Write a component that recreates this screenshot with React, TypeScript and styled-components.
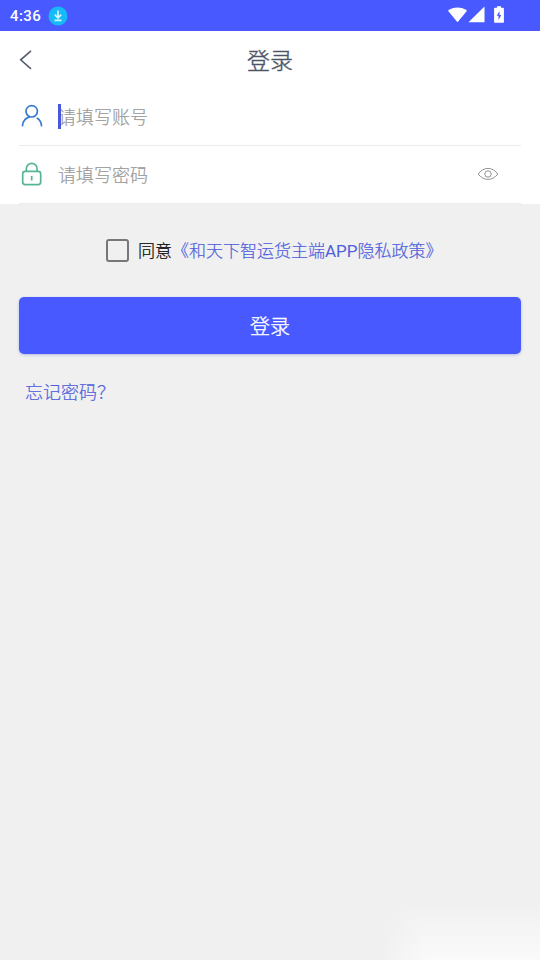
import React from 'react';
import styled, { createGlobalStyle } from 'styled-components';

const GlobalStyle = createGlobalStyle`
  * { box-sizing: border-box; }
  body { margin: 0; background: #f0f0f0; }
`;

const Screen = styled.main`
  position: relative;
  display: flex;
  flex-direction: column;
  width: 540px;
  height: 960px;
  overflow: hidden;
  background: #f0f0f0;
  font-family: "Noto Sans CJK SC", sans-serif;
  font-weight: 300;
  -webkit-text-stroke: 0.2px currentColor;
`;

const StatusBar = styled.header`
  display: flex;
  align-items: center;
  height: 31px;
  padding: 0 34px 0 10px;
  background: #485aff;
  color: #fff;
`;

const Clock = styled.time`
  width: 38px;
  padding-top: 1px;
  font-family: Roboto, sans-serif;
  font-size: 15px;
  font-weight: 500;
  line-height: 30px;
  letter-spacing: 0.4px;
  white-space: nowrap;
  -webkit-text-stroke: 0;
`;

const StatusIcons = styled.div`
  display: flex;
  margin: -1px 0 0 auto;
`;

const TitleBar = styled.div`
  display: grid;
  grid-template-columns: 60px 1fr 60px;
  align-items: center;
  height: 57px;
  background: #fff;
`;

const BackButton = styled.button`
  display: flex;
  height: 57px;
  padding: 19px 0 0 19px;
  border: 0;
  background: none;
`;

const Title = styled.h1`
  margin: 0;
  padding-bottom: 1px;
  color: #4b5468;
  font-size: 23px;
  font-weight: 300;
  line-height: 56px;
  text-align: center;
  -webkit-text-stroke: 0.4px currentColor;
`;

const Form = styled.form`
  display: flex;
  flex-direction: column;
  height: 116px;
  padding: 0 19px;
  background: #fff;
`;

const Field = styled.label`
  display: flex;
  align-items: center;
  height: 58px;
  padding-right: 22px;
  border-bottom: 1px solid #ececec;
`;

const FieldIcon = styled.span`
  display: flex;
  width: 39px;
  padding-bottom: 2px;
`;

const FieldText = styled.span<{ $focused?: boolean }>`
  position: relative;
  flex: 1;
  padding-bottom: 1px;
  color: #999;
  font-size: 18px;
  line-height: 27px;

  &::before {
    content: '';
    display: ${p => (p.$focused ? 'block' : 'none')};
    position: absolute;
    left: 0;
    top: 1px;
    width: 3px;
    height: 25px;
    background: #4858d8;
  }
`;

const RevealButton = styled.span`
  display: flex;
  padding-bottom: 2px;
`;

const Agreement = styled.label`
  display: flex;
  align-items: center;
  height: 93px;
  padding-left: 106px;
  color: #000;
  font-size: 17px;
  line-height: 26px;
  white-space: nowrap;
`;

const Checkbox = styled.span`
  width: 23px;
  height: 23px;
  margin-right: 9px;
  border: 2.5px solid #777;
  border-radius: 3px;
`;

const PolicyLink = styled.a`
  color: #4f5edc;
`;

const Latin = styled.span`
  font-family: Roboto, sans-serif;
  font-weight: 400;
  -webkit-text-stroke: 0;
`;

const LoginButton = styled.button`
  height: 57px;
  margin: 0 19px;
  padding: 0;
  border: 0;
  border-radius: 5px;
  background: #485aff;
  box-shadow: 0 1px 3px rgba(72, 90, 200, 0.35);
  color: #fff;
  font: 300 20px/55px "Noto Sans CJK SC", sans-serif;
  -webkit-text-stroke: 0.35px currentColor;
`;

const ForgotLink = styled.a`
  margin: 23px 0 0 25px;
  color: #4f5edc;
  font-size: 18px;
  line-height: 28px;
`;

const CornerGlow = styled.div`
  position: absolute;
  right: 0;
  bottom: 0;
  width: 162px;
  height: 54px;
  background: linear-gradient(to bottom, #f1f1f1, #f4f4f4 30%, #fafafa);
  mask-image: linear-gradient(to right, transparent, #000 50px);
`;

const DownloadBadge = () => (
  <svg width="20" height="20" viewBox="0 0 20 20">
    <circle cx="10" cy="10" r="9.5" fill="#16baf7" />
    <path d="M10 4.500v7M6.800 8.700 10 12l3.200-3.300M6.500 14.300h7" fill="none" stroke="#d4f6ff" strokeWidth="1.700" />
  </svg>
);

const SignalIcons = () => (
  <svg width="58" height="18" viewBox="0 0 58 18" fill="#fff">
    <path d="M0 4.800C5.500.4 13.500.4 19 4.800L9.500 16.200z" />
    <path d="M36.500.5v15.700h-16z" />
    <path
      fillRule="evenodd"
      d="M49 .3h4v1.500h2q.9 0 .9.9v13.200q0 .9-.9.9h-8q-.9 0-.9-.9V2.700q0-.9.9-.9h2zM51.500 5 48.700 9.800h1.800V14l2.800-5h-1.800z"
    />
  </svg>
);

const ChevronIcon = () => (
  <svg width="14" height="20" viewBox="0 0 14 20">
    <path d="M12 .8 1.700 9.800 12 18.800" fill="none" stroke="#565b70" strokeWidth="1.600" />
  </svg>
);

const UserIcon = () => (
  <svg width="26" height="26" viewBox="0 0 26 26" fill="none" stroke="#397bd0" strokeWidth="1.700" strokeLinecap="round">
    <circle cx="12.700" cy="8.300" r="5.700" />
    <path d="M3.500 22.700c.3-4.500 2.900-7.600 7-8.800M18.300 15.300c2.500 1.600 4 4.200 4.200 7.400" />
  </svg>
);

const LockIcon = () => (
  <svg width="26" height="26" viewBox="0 0 26 26" fill="none" stroke="#57b692" strokeWidth="1.700">
    <rect x="3.700" y="10.300" width="18" height="13.300" rx="2.500" />
    <path d="M7.300 10.300V7.700a5.400 5.400 0 0 1 10.800 0v2.600M12.700 15v4.500" />
  </svg>
);

const EyeIcon = () => (
  <svg width="22" height="14" viewBox="0 0 22 14" fill="none" stroke="#929292" strokeWidth="1">
    <path d="M1.200 7C6.500-.5 15.500-.5 20.800 7 15.500 14.200 6.500 14.200 1.200 7z" />
    <circle cx="11" cy="7" r="3.200" />
  </svg>
);

export default function App() {
  return (
    <Screen lang="zh-CN">
      <GlobalStyle />
      <StatusBar>
        <Clock>4:36</Clock>
        <DownloadBadge />
        <StatusIcons>
          <SignalIcons />
        </StatusIcons>
      </StatusBar>
      <TitleBar>
        <BackButton type="button" aria-label="返回">
          <ChevronIcon />
        </BackButton>
        <Title>登录</Title>
      </TitleBar>
      <Form>
        <Field>
          <FieldIcon><UserIcon /></FieldIcon>
          <FieldText $focused>请填写账号</FieldText>
        </Field>
        <Field>
          <FieldIcon><LockIcon /></FieldIcon>
          <FieldText>请填写密码</FieldText>
          <RevealButton><EyeIcon /></RevealButton>
        </Field>
      </Form>
      <Agreement>
        <Checkbox />
        <span>
          同意<PolicyLink>《和天下智运货主端<Latin>APP</Latin>隐私政策》</PolicyLink>
        </span>
      </Agreement>
      <LoginButton type="button">登录</LoginButton>
      <ForgotLink>忘记密码？</ForgotLink>
      <CornerGlow />
    </Screen>
  );
}
